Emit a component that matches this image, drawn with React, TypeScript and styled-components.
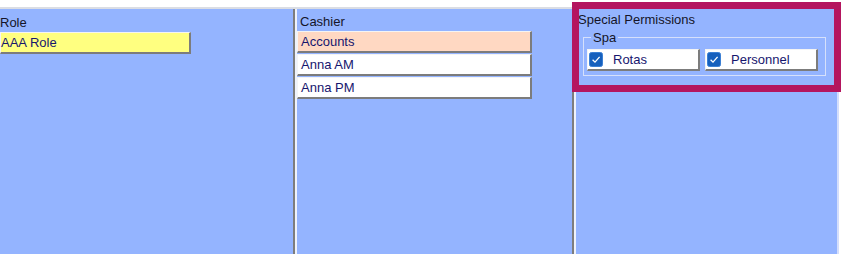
import styled, { createGlobalStyle } from "styled-components";

const GlobalStyle = createGlobalStyle`
  html, body {
    margin: 0;
    padding: 0;
    background: #ffffff;
  }
  body {
    font-family: "Liberation Sans", Arial, sans-serif;
    font-size: 13px;
  }
`;

const roles = ["AAA Role"];
const cashiers = [
  { name: "Accounts", selected: true },
  { name: "Anna AM", selected: false },
  { name: "Anna PM", selected: false },
];
const permissions = ["Rotas", "Personnel"];

export default function App() {
  return (
    <Screen>
      <GlobalStyle />
      <Workspace>
        <Column width={293}>
          <Label>Role</Label>
          {roles.map((r) => (
            <ListItem key={r} width={191} bg="#ffff80" indent={0}>
              {r}
            </ListItem>
          ))}
        </Column>
        <Splitter />
        <Column width={275}>
          <Label indent={3} top={5}>Cashier</Label>
          <ItemStack>
            {cashiers.map((c) => (
              <ListItem key={c.name} width={235} bg={c.selected ? "#ffd8c2" : "#ffffff"} indent={3}>
                {c.name}
              </ListItem>
            ))}
          </ItemStack>
        </Column>
        <Splitter />
        <Column>
          <Label indent={2} top={3}>Special Permissions</Label>
          <Group>
            <Legend>Spa</Legend>
            <CheckRow>
              {permissions.map((p) => (
                <CheckButton key={p}>
                  <CheckIcon />
                  <span>{p}</span>
                </CheckButton>
              ))}
            </CheckRow>
          </Group>
        </Column>
      </Workspace>
      <Highlight />
    </Screen>
  );
}

function CheckIcon() {
  return (
    <svg width="14" height="15" viewBox="0 0 14 15">
      <rect x="0.5" y="0.5" width="13" height="14" rx="2" fill="#1660bd" stroke="#3a7fd4" />
      <path d="M3.6 7.8 L6 10.1 L10.6 4.9" fill="none" stroke="#ffffff" strokeWidth="1.3" />
    </svg>
  );
}

const Screen = styled.div`
  position: relative;
  height: 254px;
  padding-top: 7px;
  box-sizing: border-box;
  overflow: hidden;
`;

const Workspace = styled.div`
  display: flex;
  height: 247px;
  width: 839px;
  background: #94b4ff;
  border-top: 2px solid #dadde4;
  border-right: 2px solid #d4defc;
  box-sizing: border-box;
`;

const Column = styled.div<{ width?: number }>`
  ${(p) => (p.width ? `width: ${p.width}px;` : "flex: 1;")}
  flex-shrink: 0;
  display: flex;
  flex-direction: column;
  align-items: flex-start;
`;

const Splitter = styled.div`
  width: 4px;
  flex-shrink: 0;
  border-left: 2px solid #7d7d7d;
  border-right: 2px solid #eef2fb;
  box-sizing: border-box;
`;

const Label = styled.div<{ indent?: number; top?: number }>`
  padding: ${(p) => p.top ?? 6}px 0 2px ${(p) => p.indent ?? 0}px;
  line-height: 15px;
  color: #141428;
`;

const ItemStack = styled.div`
  display: flex;
  flex-direction: column;
  gap: 1px;
`;

const ListItem = styled.div<{ width: number; bg: string; indent: number }>`
  width: ${(p) => p.width}px;
  height: 22px;
  box-sizing: border-box;
  background: ${(p) => p.bg};
  border-top: 1px solid #f4f4f4;
  border-left: 1px solid #f4f4f4;
  border-right: 2px solid #7c7c7c;
  border-bottom: 2px solid #7c7c7c;
  padding: 1px 0 0 ${(p) => p.indent}px;
  line-height: 17px;
  color: #16166e;
  white-space: nowrap;
`;

const Group = styled.fieldset`
  margin: 1px 0 0 7px;
  width: 243px;
  box-sizing: border-box;
  border: 1px solid #d6e0fb;
  padding: 4px 3px 4px 3px;
`;

const Legend = styled.legend`
  margin-left: 4px;
  padding: 0 2px;
  line-height: 15px;
  color: #141428;
`;

const CheckRow = styled.div`
  display: flex;
  gap: 5px;
`;

const CheckButton = styled.div`
  width: 113px;
  height: 22px;
  box-sizing: border-box;
  display: flex;
  align-items: center;
  gap: 10px;
  padding-left: 1px;
  background: #ffffff;
  border-top: 1px solid #f4f4f4;
  border-left: 1px solid #f4f4f4;
  border-right: 2px solid #7c7c7c;
  border-bottom: 2px solid #7c7c7c;
  color: #16166e;
  svg {
    flex-shrink: 0;
  }
`;

const Highlight = styled.div`
  position: absolute;
  left: 572px;
  top: 2px;
  width: 269px;
  height: 90px;
  box-sizing: border-box;
  border: 7px solid #b4155f;
  pointer-events: none;
`;
